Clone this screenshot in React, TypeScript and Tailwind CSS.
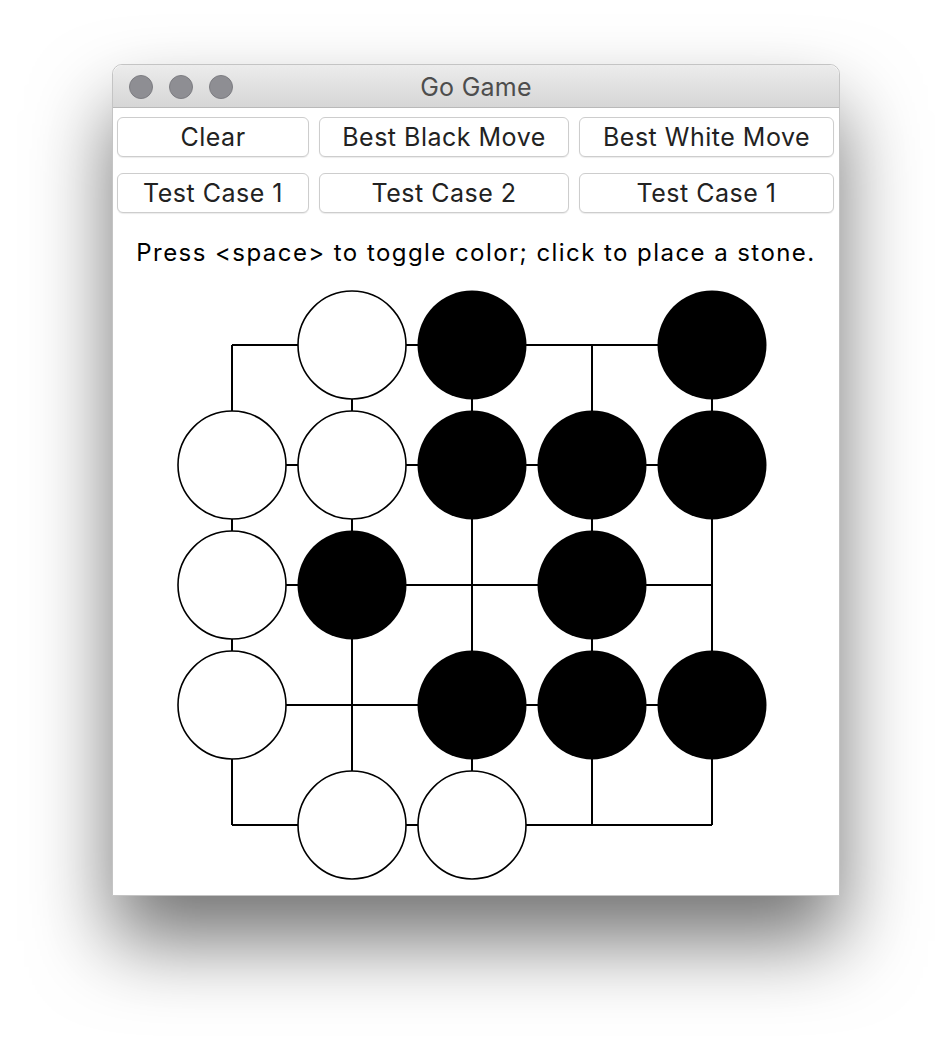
import React from "react";

type Stone = "B" | "W" | null;

const board: Stone[][] = [
  [null, "W", "B", null, "B"],
  ["W", "W", "B", "B", "B"],
  ["W", "B", null, "B", null],
  ["W", null, "B", "B", "B"],
  [null, "W", "W", null, null],
];

const GAP = 120;
const OX = 119;
const OY = 78;
const R = 54;

function Board() {
  const n = board.length;
  const end = (n - 1) * GAP;
  return (
    <svg width={728} height={628} className="block">
      {board.map((_, i) => (
        <g key={"l" + i}>
          <line x1={OX} y1={OY + i * GAP} x2={OX + end} y2={OY + i * GAP} stroke="#000" strokeWidth={2} />
          <line x1={OX + i * GAP} y1={OY} x2={OX + i * GAP} y2={OY + end} stroke="#000" strokeWidth={2} />
        </g>
      ))}
      {board.map((row, r) =>
        row.map((s, c) =>
          s ? (
            <circle
              key={r + "-" + c}
              cx={OX + c * GAP}
              cy={OY + r * GAP}
              r={s === "B" ? R + 0.5 : R}
              fill={s === "B" ? "#000" : "#fff"}
              stroke="#000"
              strokeWidth={s === "B" ? 0 : 1.6}
            />
          ) : null
        )
      )}
    </svg>
  );
}

function Btn({ label, w }: { label: string; w: string }) {
  return (
    <button
      className={`${w} h-[40px] rounded-[6px] border border-[#cdcdcd] bg-white text-[25px] leading-none tracking-[0.02em] text-[#222] shadow-[0_1px_1px_rgba(0,0,0,0.08)] flex items-center justify-center`}
    >
      {label}
    </button>
  );
}

export default function App() {
  return (
    <div className="min-h-[1056px] bg-white pl-[112px] pt-[64px] font-['Inter','Liberation_Sans',Arial,sans-serif]">
      <div className="w-[728px] rounded-t-[10px] border border-[#c4c4c4] bg-white shadow-[0_45px_80px_rgba(0,0,0,0.55)]">
        <div className="relative flex h-[43px] items-center justify-center rounded-t-[10px] border-b border-[#b9b9b9] bg-gradient-to-b from-[#ececec] to-[#d6d6d6]">
          <div className="absolute left-[16px] top-[10px] flex gap-[16px]">
            <span className="h-[24px] w-[24px] rounded-full border border-[#7d7d82] bg-[#8e8e93]" />
            <span className="h-[24px] w-[24px] rounded-full border border-[#7d7d82] bg-[#8e8e93]" />
            <span className="h-[24px] w-[24px] rounded-full border border-[#7d7d82] bg-[#8e8e93]" />
          </div>
          <span className="pt-[3px] text-[25px] tracking-[0.01em] text-[#4d4d4d]">Go Game</span>
        </div>
        <div className="flex flex-col gap-[16px] pl-[4px] pt-[9px]">
          <div className="flex gap-[10px]">
            <Btn label="Clear" w="w-[192px]" />
            <Btn label="Best Black Move" w="w-[250px]" />
            <Btn label="Best White Move" w="w-[255px]" />
          </div>
          <div className="flex gap-[10px]">
            <Btn label="Test Case 1" w="w-[192px]" />
            <Btn label="Test Case 2" w="w-[250px]" />
            <Btn label="Test Case 1" w="w-[255px]" />
          </div>
        </div>
        <div className="pt-[26px] text-center text-[24px] leading-[28px] tracking-[0.06em] text-black">
          Press &lt;space&gt; to toggle color; click to place a stone.
        </div>
        <Board />
      </div>
    </div>
  );
}
